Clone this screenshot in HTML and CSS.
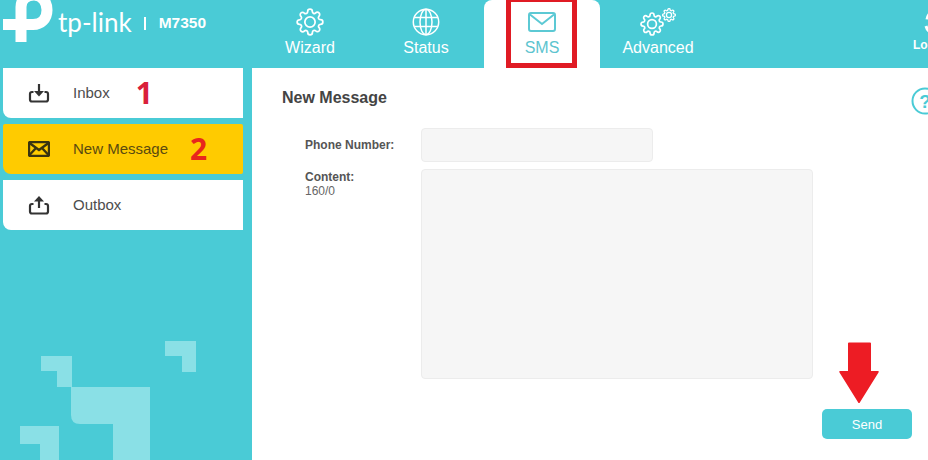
FILE: index.html
```html
<!DOCTYPE html>
<html lang="en">
<head>
    <meta charset="UTF-8">
    <meta name="viewport" content="width=device-width, initial-scale=1.0">
    <title>SMS - New Message</title>
    <link rel="stylesheet" href="styles.css">
</head>
<body>
    <svg class="defs" width="0" height="0">
        <symbol id="gear" viewBox="0 0 24 24">
            <circle cx="12" cy="12" r="4.4"/>
            <path d="M19.4 15a1.65 1.65 0 0 0 .33 1.82l.06.06a2 2 0 0 1 0 2.83 2 2 0 0 1-2.83 0l-.06-.06a1.65 1.65 0 0 0-1.82-.33 1.65 1.65 0 0 0-1 1.51V21a2 2 0 0 1-2 2 2 2 0 0 1-2-2v-.09A1.65 1.65 0 0 0 9 19.4a1.65 1.65 0 0 0-1.82.33l-.06.06a2 2 0 0 1-2.83 0 2 2 0 0 1 0-2.83l.06-.06a1.65 1.65 0 0 0 .33-1.82 1.65 1.65 0 0 0-1.51-1H3a2 2 0 0 1-2-2 2 2 0 0 1 2-2h.09A1.65 1.65 0 0 0 4.6 9a1.65 1.65 0 0 0-.33-1.82l-.06-.06a2 2 0 0 1 0-2.83 2 2 0 0 1 2.83 0l.06.06a1.65 1.65 0 0 0 1.82.33H9a1.65 1.65 0 0 0 1-1.51V3a2 2 0 0 1 2-2 2 2 0 0 1 2 2v.09a1.65 1.65 0 0 0 1 1.51 1.65 1.65 0 0 0 1.82-.33l.06-.06a2 2 0 0 1 2.83 0 2 2 0 0 1 0 2.83l-.06.06a1.65 1.65 0 0 0-.33 1.82V9a1.65 1.65 0 0 0 1.51 1H21a2 2 0 0 1 2 2 2 2 0 0 1-2 2h-.09a1.65 1.65 0 0 0-1.51 1z"/>
        </symbol>
    </svg>

    <div class="header">
        <div class="brand">
            <svg class="logo-mark" viewBox="0 0 54 42" width="54" height="42">
                <path d="M21 42V7C21-1 27-5 34-5C43-5 47 3 47 10C47 19 41 24.500 33 24.500H3"/>
            </svg>
            <span class="logo-text">tp-link</span>
            <span class="logo-sep"></span>
            <span class="model">M7350</span>
        </div>
        <div class="nav">
            <div class="nav-item">
                <svg class="nav-icon" width="28" height="28"><use href="#gear"/></svg>
                <span>Wizard</span>
            </div>
            <div class="nav-item">
                <svg class="nav-icon" viewBox="0 0 28 28" width="28" height="28">
                    <circle cx="14" cy="14" r="12.7"/>
                    <ellipse cx="14" cy="14" rx="6" ry="12.7"/>
                    <path d="M14 1.3V26.7M2.5 9.5H25.5M2.5 18.5H25.5"/>
                </svg>
                <span>Status</span>
            </div>
            <div class="nav-item active">
                <svg class="nav-icon mail-icon" viewBox="0 0 28 20" width="28" height="20">
                    <rect x="1" y="1" width="26" height="18" rx="2"/>
                    <path d="M2 2.5L14 12L26 2.5"/>
                </svg>
                <span>SMS</span>
                <div class="red-box"></div>
            </div>
            <div class="nav-item">
                <div class="gears">
                    <svg class="nav-icon gear-big" width="24" height="24"><use href="#gear"/></svg>
                    <svg class="nav-icon gear-small" width="14" height="14"><use href="#gear"/></svg>
                </div>
                <span>Advanced</span>
            </div>
        </div>
        <div class="logout">
            <svg class="nav-icon logout-icon" viewBox="0 0 24 26" width="24" height="26">
                <path d="M3 10.500A11 11 0 0 1 12 1"/>
                <path d="M2 17A11 11 0 0 0 6 23"/>
            </svg>
            <span>Logout</span>
        </div>
    </div>

    <div class="page">
        <div class="sidebar">
            <div class="side-item">
                <svg class="side-icon" viewBox="0 0 22 20" width="22" height="20">
                    <path d="M5.500 9H4Q2 9 2 11V16.500Q2 18.500 4 18.500H18Q20 18.500 20 16.500V11Q20 9 18 9H16.500"/>
                    <path d="M11 1V8"/>
                    <path class="solid" d="M6 8H16L11 13.500Z"/>
                </svg>
                <span class="side-label">Inbox</span>
                <span class="mark mark-one">1</span>
            </div>
            <div class="side-item selected">
                <svg class="side-icon envelope" viewBox="0 0 22 16" width="22" height="16">
                    <rect x="1" y="1" width="20" height="14" rx="1.5"/>
                    <path d="M1.500 2L11 9L20.500 2M1.500 14L8 7M20.500 14L14 7"/>
                </svg>
                <span class="side-label">New Message</span>
                <span class="mark mark-two">2</span>
            </div>
            <div class="side-item">
                <svg class="side-icon" viewBox="0 0 22 20" width="22" height="20">
                    <path d="M5.500 9H4Q2 9 2 11V16.500Q2 18.500 4 18.500H18Q20 18.500 20 16.500V11Q20 9 18 9H16.500"/>
                    <path d="M11 13V5"/>
                    <path class="solid" d="M6 6.500L11 1L16 6.500Z"/>
                </svg>
                <span class="side-label">Outbox</span>
            </div>
            <svg class="side-deco" viewBox="0 0 252 460" width="252" height="460">
                <path d="M165 341H196V372H182V356H165Z"/>
                <path d="M41 356H72V387H57V371H41Z"/>
                <path d="M71 387H150V460H113V424H80Q71 424 71 415Z"/>
                <path d="M20 426H59V460H40V444H20Z"/>
            </svg>
        </div>

        <div class="content">
            <h3 class="title">New Message</h3>
            <svg class="help" viewBox="0 0 28 28" width="28" height="28">
                <circle cx="14" cy="14" r="12.500"/>
                <text x="14" y="20.500" text-anchor="middle">?</text>
            </svg>
            <div class="form-row phone-row">
                <label class="form-label">Phone Number:</label>
                <div class="field phone-field"></div>
            </div>
            <div class="form-row">
                <div class="form-label content-label">
                    Content:
                    <div class="counter">160/0</div>
                </div>
                <div class="field message-field"></div>
            </div>
            <div class="actions">
                <button class="send" type="button">Send</button>
            </div>
            <svg class="red-arrow" viewBox="0 0 42 62" width="42" height="62">
                <path d="M10 1.500Q10 0.500 11 0.500H32Q33 0.500 33 1.500V29H40Q41.500 29 40.500 30.500L21.500 61H20.500L1.500 30.500Q0.500 29 2 29H10Z"/>
            </svg>
        </div>
    </div>
</body>
</html>
```

FILE: styles.css
```css
html, body {
    margin: 0;
    height: 460px;
    overflow: hidden;
}

body {
    font-family: "Liberation Sans", Arial, sans-serif;
    background-color: #fff;
    color: #4a4a4a;
    width: 928px;
}

.defs {
    display: block;
    height: 0;
}

.header {
    height: 68px;
    display: flex;
    background-color: #4acbd6;
    color: #fff;
    position: relative;
}

.brand {
    width: 252px;
    flex-shrink: 0;
    display: flex;
    align-items: center;
}

.logo-mark {
    align-self: flex-start;
    flex-shrink: 0;
}

.logo-mark path {
    fill: none;
    stroke: #fff;
    stroke-width: 11;
}

.logo-text {
    font-family: "Lato", sans-serif;
    font-weight: 400;
    font-size: 26px;
    margin-left: 4px;
    margin-top: -24px;
}

.logo-sep {
    width: 2px;
    height: 13px;
    background-color: #fff;
    margin: -22px 13px 0 12px;
}

.model {
    font-size: 15.500px;
    font-weight: bold;
    margin-top: -22px;
}

.nav {
    display: flex;
}

.nav-item {
    width: 116px;
    height: 68px;
    display: flex;
    flex-direction: column;
    align-items: center;
    padding-top: 8px;
    box-sizing: border-box;
    font-size: 16px;
    position: relative;
}

.nav-item span {
    position: absolute;
    top: 39px;
}

.nav-icon {
    display: block;
    fill: none;
    stroke: #fff;
    stroke-width: 1.500;
}

.nav-item.active {
    background-color: #fff;
    color: #5cc4cf;
    border-radius: 8px 8px 0 0;
    padding-top: 12px;
}

.mail-icon {
    stroke: #5cc9d4;
    stroke-width: 2;
}

.red-box {
    position: absolute;
    left: 22px;
    top: -3px;
    width: 71px;
    height: 71px;
    border: 5px solid #e01b24;
    box-sizing: border-box;
}

.gears {
    width: 36px;
    height: 28px;
    position: relative;
}

.gear-big {
    position: absolute;
    left: 0;
    bottom: 0;
    stroke-width: 1.700;
}

.gear-small {
    position: absolute;
    right: 0;
    top: 0;
    stroke-width: 2.200;
}

.logout {
    position: absolute;
    left: 913px;
    top: 9px;
    width: 50px;
    font-size: 12px;
    font-weight: bold;
}

.logout-icon {
    margin-left: 11px;
    margin-bottom: 3px;
    stroke-width: 3;
}

.page {
    display: flex;
    height: 392px;
}

.sidebar {
    width: 252px;
    flex-shrink: 0;
    background-color: #4acbd6;
    position: relative;
    overflow: hidden;
    padding: 0 9px 0 3px;
    box-sizing: border-box;
    display: flex;
    flex-direction: column;
    gap: 6px;
}

.side-item {
    height: 50px;
    flex-shrink: 0;
    display: flex;
    align-items: center;
    padding-left: 25px;
    background-color: #fff;
    border-bottom-left-radius: 8px;
    font-size: 15px;
    color: #4d4d4d;
    position: relative;
    z-index: 1;
}

.side-item.selected {
    background-color: #ffcb00;
    border-radius: 2px 2px 2px 8px;
    color: #5a4a10;
}

.side-icon {
    width: 22px;
    flex-shrink: 0;
    fill: none;
    stroke: #333;
    stroke-width: 2.200;
}

.side-icon.envelope {
    stroke: #3a3410;
    stroke-width: 2.400;
}

.side-icon .solid {
    fill: #333;
    stroke: none;
}

.side-label {
    margin: -2px 0 0 23px;
}

.mark {
    font-family: "Noto Sans", sans-serif;
    font-weight: bold;
    font-size: 30px;
    line-height: 1;
}

.mark-one {
    color: #d9203a;
    margin-left: 26px;
}

.mark-two {
    color: #e8261c;
    margin-left: 22px;
}

.side-deco {
    position: absolute;
    left: 0;
    top: -68px;
    fill: #8ae0e6;
}

.content {
    flex-grow: 1;
    position: relative;
    padding: 20px 0 0 30px;
}

.title {
    margin: 0;
    font-size: 16px;
    line-height: 19px;
    color: #444;
}

.help {
    position: absolute;
    left: 659px;
    top: 19px;
    fill: none;
    stroke: #4acbd6;
    stroke-width: 2;
}

.help text {
    fill: #4acbd6;
    stroke: none;
    font-size: 19px;
    font-weight: bold;
}

.form-row {
    display: flex;
    margin-bottom: 7px;
    padding-left: 23px;
}

.phone-row {
    margin-top: 21px;
    align-items: center;
}

.form-label {
    width: 116px;
    flex-shrink: 0;
    font-size: 12px;
    font-weight: bold;
    line-height: 14px;
    color: #555;
}

.content-label {
    padding-top: 1px;
}

.counter {
    font-weight: normal;
    color: #666;
}

.field {
    background-color: #f6f6f6;
    border: 1px solid #ececec;
    border-radius: 4px;
    box-sizing: border-box;
}

.phone-field {
    width: 232px;
    height: 34px;
}

.message-field {
    width: 392px;
    height: 210px;
}

.actions {
    display: flex;
    justify-content: flex-end;
    padding-right: 16px;
    margin-top: 30px;
}

.send {
    width: 90px;
    height: 30px;
    border: none;
    border-radius: 5px;
    background-color: #4acbd6;
    color: #fff;
    font-family: "Liberation Sans", Arial, sans-serif;
    font-size: 13px;
}

.red-arrow {
    position: absolute;
    left: 586px;
    top: 274px;
    fill: #ed1c24;
}
```
